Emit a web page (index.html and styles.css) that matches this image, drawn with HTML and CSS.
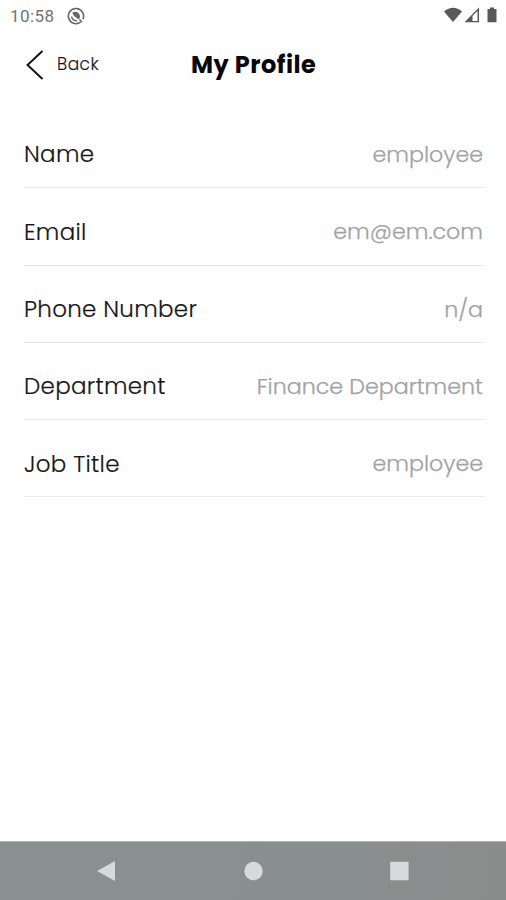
FILE: index.html
```html
<!DOCTYPE html>
<html lang="en">
<head>
<meta charset="utf-8">
<title>My Profile</title>
<link rel="stylesheet" href="styles.css">
</head>
<body>
<div class="status">
  <span class="time">10:58</span>
  <svg class="app-icon" viewBox="0 0 18 18"><g fill="none" stroke="#666"><path d="M13.600 15.100A7.600 7.600 0 1 1 15.900 12.200" stroke-width="1.600"/><path d="M4.600 9.500a4.600 4.600 0 0 0 5.400 4.200" stroke-width="1.400"/></g><path d="M5.200 5.800C8 3.800 12.600 5 13 9.400c0 1.500-.8 2.400-1.700 3.200L9.300 10.500 7 9z" fill="#666"/><path d="M12.500 12.500l2.500 2.500" stroke="#666" stroke-width="1.600"/></svg>
  <svg class="signals" viewBox="0 0 56 18"><g fill="#585858"><path d="M0 4.500Q9 -3 18 4.500L9 15z"/><path d="M20.500 15.200L35 .5v14.700z"/><path d="M46 .5h4V2h2.500v13.200h-9V2H46z"/></g><path d="M28.500 9L33.500 4v9.900h-5z" fill="#fff"/></svg>
</div>
<header class="header">
  <a class="back"><svg class="chevron" viewBox="0 0 18 30"><path d="M16.500 1L1.500 15l15 14" fill="none" stroke="#111" stroke-width="1.900"/></svg><span>Back</span></a>
  <h1 class="title">My Profile</h1>
</header>
<main class="list">
  <div class="row"><span class="label">Name</span><span class="value">employee</span></div>
  <div class="row"><span class="label">Email</span><span class="value">em@em.com</span></div>
  <div class="row"><span class="label">Phone Number</span><span class="value">n/a</span></div>
  <div class="row"><span class="label">Department</span><span class="value">Finance Department</span></div>
  <div class="row"><span class="label">Job Title</span><span class="value">employee</span></div>
</main>
<nav class="nav">
  <svg viewBox="0 0 20 22"><path d="M0 11L18 1v20z"/></svg>
  <svg viewBox="0 0 20 22"><circle cx="10.500" cy="11" r="9.200"/></svg>
  <svg viewBox="0 0 20 22"><rect x="1.200" y="1.700" width="18.400" height="18.600" rx="1"/></svg>
</nav>
</body>
</html>
```

FILE: styles.css
```css
* { box-sizing: border-box; }
body {
  margin: 0;
  width: 506px;
  height: 900px;
  display: flex;
  flex-direction: column;
  overflow: hidden;
  background: #fefefe;
  color: #171717;
  font-family: Poppins, Inter, sans-serif;
}
.status {
  height: 32px;
  padding: 0 6px 0 10px;
  display: flex;
  align-items: center;
  color: #737373;
  font: 17px Roboto, sans-serif;
}
.time { width: 57px; letter-spacing: .4px; }
.app-icon { width: 18px; height: 18px; }
.signals { width: 56px; height: 18px; margin-left: auto; }
.header {
  height: 79px;
  padding: 0 24px;
  display: grid;
  grid-template-columns: 167px 1fr;
  align-items: start;
}
.back {
  height: 66px;
  padding-left: 2px;
  display: flex;
  align-items: center;
  font-size: 17px;
  font-weight: 300;
  letter-spacing: .5px;
  -webkit-text-stroke: .15px #171717;
}
.chevron { width: 18px; height: 30px; margin-right: 13px; }
.back span { margin-top: -3px; }
.title {
  margin: 0;
  line-height: 66px;
  font-size: 24px;
  font-weight: 700;
  letter-spacing: .5px;
  color: #080808;
  white-space: nowrap;
}
.list { padding: 0 22px 0 24px; flex: 1; }
.row {
  height: 77.3px;
  padding: 10.6px 1px 0 0;
  display: flex;
  align-items: center;
  justify-content: space-between;
  border-bottom: 1.5px solid #e9e9e9;
  white-space: nowrap;
}
.row:first-child { height: 77.3px; }
.label {
  font-size: 23px;
  font-weight: 300;
  letter-spacing: .3px;
  -webkit-text-stroke: .2px #171717;
}
.value {
  font-size: 22.2px;
  font-weight: 300;
  color: #a0a3a3;
  -webkit-text-stroke: .25px #a0a3a3;
}
.nav {
  height: 59px;
  padding: 0 97px;
  display: flex;
  align-items: center;
  justify-content: space-between;
  border-top: 1px solid #b0b5b4;
  background: linear-gradient(90deg, #8a9191, #898f8f 60%, #8a8d8c);
}
.nav svg { width: 20px; height: 22px; fill: #d7dada; }
```
